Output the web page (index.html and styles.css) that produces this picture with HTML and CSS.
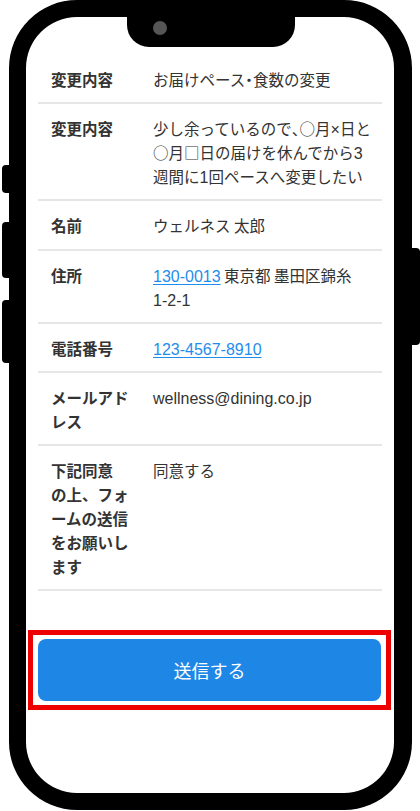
FILE: index.html
```html
<!DOCTYPE html>
<html lang="ja">
<head>
<meta charset="utf-8">
<title>確認</title>
<link rel="stylesheet" href="styles.css">
</head>
<body>
<div class="device">
  <span class="side-btn left b1"></span>
  <span class="side-btn left b2"></span>
  <span class="side-btn left b3"></span>
  <span class="side-btn right b4"></span>
  <div class="frame">
    <div class="screen">
      <div class="notch"><span class="camera"></span></div>
      <div class="table">
        <div class="row"><div class="label">変更内容</div><div class="value">お届けペース<span class="half">・</span>食数の変更</div></div>
        <div class="row"><div class="label">変更内容</div><div class="value">少し余っているので<span class="half">、</span><span class="cjk">○</span>月<span class="en">×</span>日と<br><span class="cjk">○</span>月<span class="cjk">□</span>日の届けを休んでから<span class="en">3</span><br>週間に<span class="en">1</span>回ペースへ変更したい</div></div>
        <div class="row"><div class="label">名前</div><div class="value">ウェルネス 太郎</div></div>
        <div class="row"><div class="label">住所</div><div class="value"><a class="link en" href="#">130-0013</a> 東京都 墨田区錦糸<br><span class="en">1-2-1</span></div></div>
        <div class="row"><div class="label">電話番号</div><div class="value"><a class="link en" href="#">123-4567-8910</a></div></div>
        <div class="row"><div class="label">メールアド<br>レス</div><div class="value"><span class="en">wellness@dining.co.jp</span></div></div>
        <div class="row"><div class="label">下記同意<br>の上、フォ<br>ームの送信<br>をお願いし<br>ます</div><div class="value">同意する</div></div>
      </div>
      <div class="highlight">
        <button class="submit" type="button">送信する</button>
      </div>
    </div>
  </div>
</div>
</body>
</html>
```

FILE: styles.css
```css
html, body {
  margin: 0;
  padding: 0;
  background: #fff;
}

.device {
  position: relative;
  width: 420px;
  height: 811px;
  overflow: hidden;
}

.frame {
  margin-left: 9px;
  width: 403px;
  height: 810px;
  box-sizing: border-box;
  border: 17px solid #000;
  border-right-width: 18px;
  border-radius: 68px;
  overflow: hidden;
  background: #fff;
}

.screen {
  position: relative;
  height: 100%;
  padding-top: 38px;
  box-sizing: border-box;
  font-family: "Noto Sans CJK JP", sans-serif;
  color: #333;
}

.notch {
  position: absolute;
  top: 0;
  left: 101px;
  width: 168px;
  height: 30px;
  background: #000;
  border-radius: 0 0 22px 22px;
}

.camera {
  position: absolute;
  left: 26px;
  top: 4px;
  width: 14px;
  height: 14px;
  border-radius: 50%;
  background: #555;
}

.side-btn {
  position: absolute;
  background: #000;
}

.side-btn.left {
  left: 2px;
  width: 10px;
  border-radius: 4px 0 0 4px;
}

.side-btn.right {
  right: 0;
  width: 10px;
  border-radius: 0 4px 4px 0;
}

.b1 { top: 165px; height: 28px; }
.b2 { top: 222px; height: 56px; }
.b3 { top: 300px; height: 63px; }
.b4 { top: 248px; height: 97px; }

.table {
  margin: 0 12px;
  width: 344px;
}

.row {
  display: grid;
  grid-template-columns: 115px 1fr;
  padding: 12px 0 11.2px;
  border-bottom: 2px solid #e6e6e6;
  font-size: 15.5px;
  line-height: 24px;
}

.label {
  padding-left: 13px;
  font-weight: 700;
  color: #333;
}

.value {
  white-space: nowrap;
  color: #333;
}

.en {
  font-family: "Liberation Sans", sans-serif;
  font-size: 16px;
  line-height: 1;
}

.cjk {
  line-height: 1;
}

.half {
  font-feature-settings: "halt";
  line-height: 1;
}

.link {
  color: #1f8deb;
  text-decoration: underline;
  text-underline-offset: 2px;
}

.highlight {
  margin: 39px 0 0 2px;
  width: 363px;
  box-sizing: border-box;
  border: 5px solid #ee0000;
  padding: 4px 5px;
}

.submit {
  display: block;
  width: 100%;
  height: 62px;
  border: 0;
  border-radius: 8px;
  background: #1e87e5;
  color: #fff;
  font-family: "Noto Sans CJK JP", sans-serif;
  font-size: 18px;
  cursor: pointer;
}
```
